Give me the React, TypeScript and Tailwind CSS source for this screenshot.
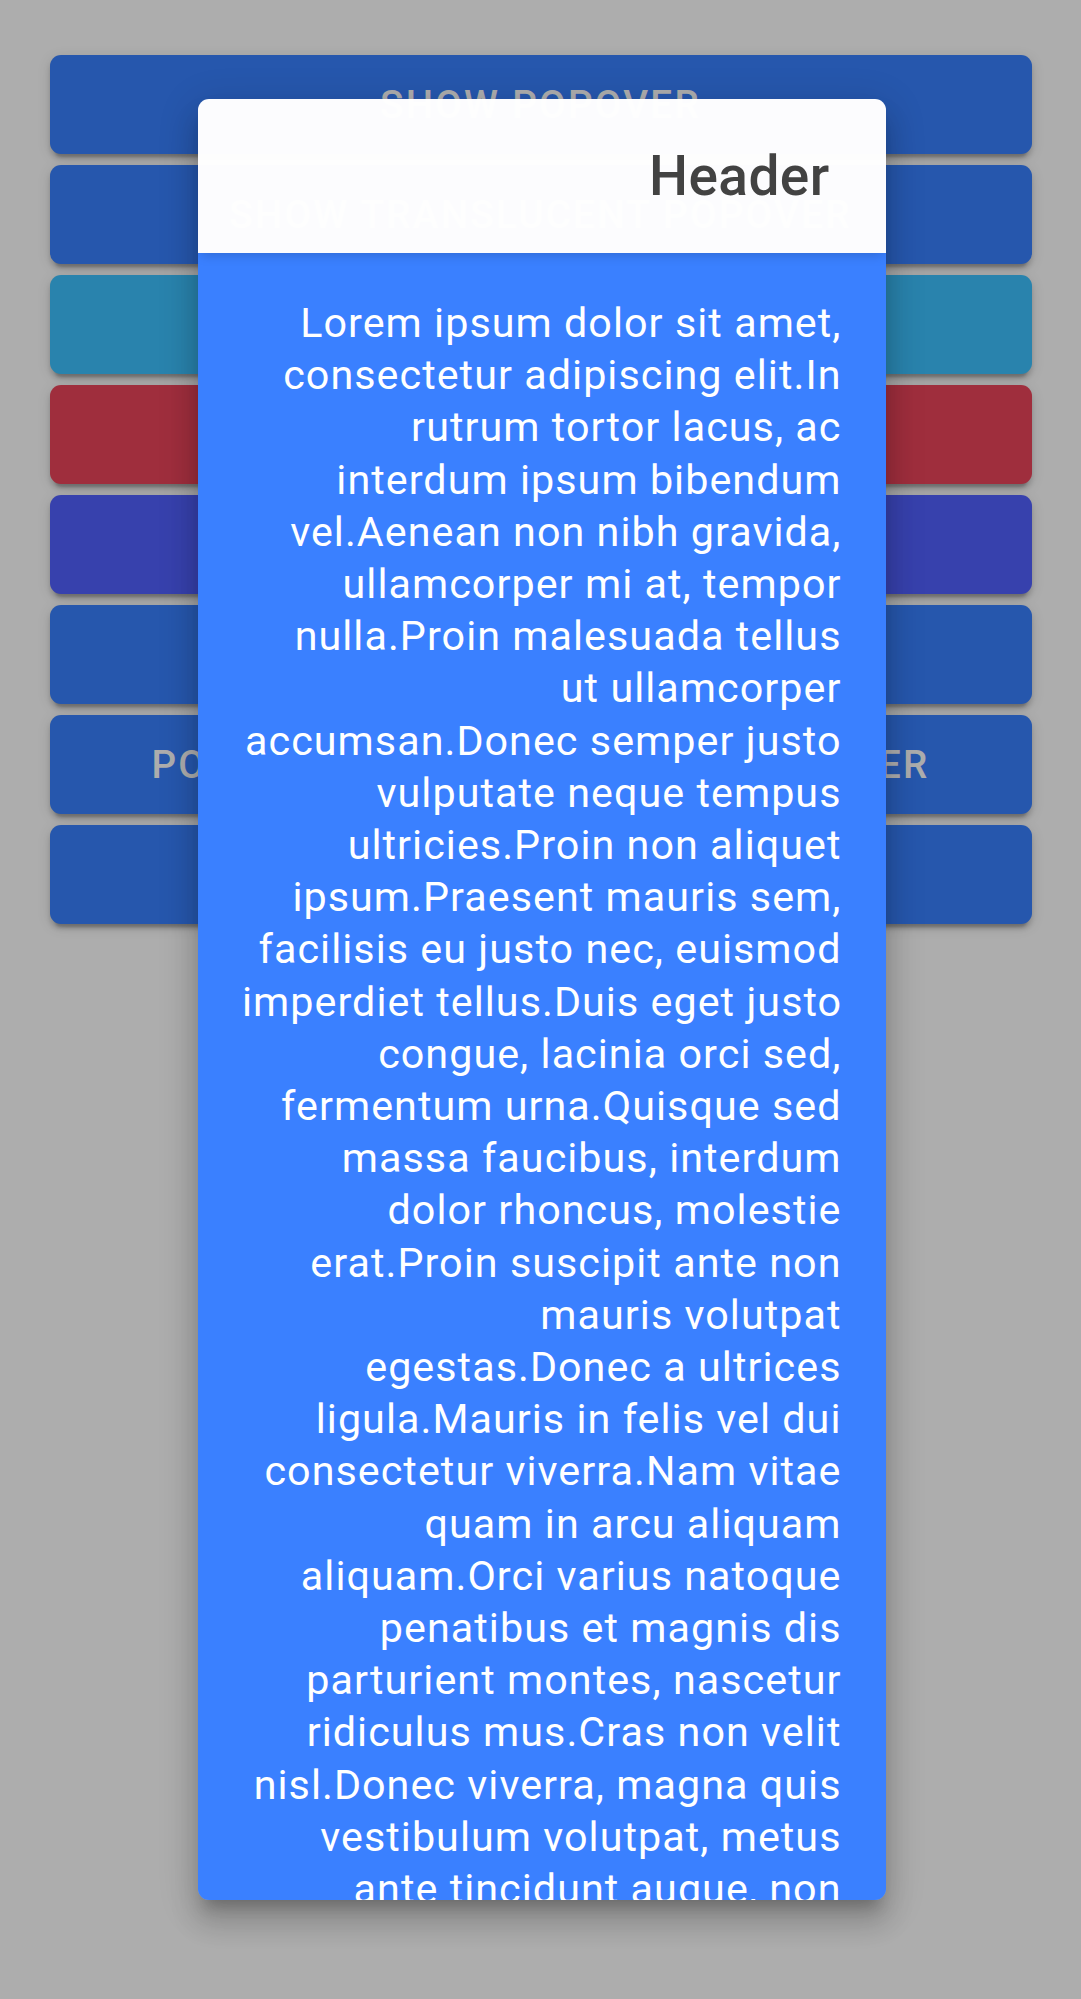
import React from "react";

const buttons: { label: string; bg: string }[] = [
  { label: "Show Popover", bg: "bg-[#3880ff]" },
  { label: "Show Translucent Popover", bg: "bg-[#3880ff]" },
  { label: "Show Long List Popover", bg: "bg-[#3dc2ff]" },
  { label: "No Event Popover", bg: "bg-[#eb445a]" },
  { label: "Custom Class Popover", bg: "bg-[#5260ff]" },
  { label: "Popover with Header", bg: "bg-[#3880ff]" },
  { label: "Popover with Translucent Header", bg: "bg-[#3880ff]" },
  { label: "Popover with Scroll", bg: "bg-[#3880ff]" },
];

const lines = [
  "Lorem ipsum dolor sit amet,",
  "consectetur adipiscing elit.In",
  "rutrum tortor lacus, ac",
  "interdum ipsum bibendum",
  "vel.Aenean non nibh gravida,",
  "ullamcorper mi at, tempor",
  "nulla.Proin malesuada tellus",
  "ut ullamcorper",
  "accumsan.Donec semper justo",
  "vulputate neque tempus",
  "ultricies.Proin non aliquet",
  "ipsum.Praesent mauris sem,",
  "facilisis eu justo nec, euismod",
  "imperdiet tellus.Duis eget justo",
  "congue, lacinia orci sed,",
  "fermentum urna.Quisque sed",
  "massa faucibus, interdum",
  "dolor rhoncus, molestie",
  "erat.Proin suscipit ante non",
  "mauris volutpat",
  "egestas.Donec a ultrices",
  "ligula.Mauris in felis vel dui",
  "consectetur viverra.Nam vitae",
  "quam in arcu aliquam",
  "aliquam.Orci varius natoque",
  "penatibus et magnis dis",
  "parturient montes, nascetur",
  "ridiculus mus.Cras non velit",
  "nisl.Donec viverra, magna quis",
  "vestibulum volutpat, metus",
  "ante tincidunt augue, non",
  "sagittis nisl tortor vel",
  "lectus.Sed tempor nunc sed",
];

export default function App() {
  return (
    <div
      className="relative min-h-screen h-[1999px] w-full overflow-hidden bg-white"
      style={{ fontFamily: "Roboto, 'Noto Sans', sans-serif" }}
    >
      {/* page content */}
      <div className="flex flex-col gap-[11px] px-[49.5px] pt-[55px]">
        {buttons.map((b) => (
          <div
            key={b.label}
            className={`flex h-[99px] items-center justify-center rounded-[11px] ${b.bg} text-[38.5px] font-medium uppercase tracking-[0.06em] text-white shadow-[0_8px_3px_-5px_rgba(0,0,0,0.2),0_5px_5px_0_rgba(0,0,0,0.14),0_3px_14px_0_rgba(0,0,0,0.12)]`}
          >
            {b.label}
          </div>
        ))}
      </div>

      {/* backdrop */}
      <div className="absolute inset-0 bg-black/[0.32]" />

      {/* popover */}
      <div className="absolute left-[198px] top-[99px] flex h-[1801px] w-[687.5px] flex-col overflow-hidden rounded-[11px] shadow-[0_14px_14px_-8px_rgba(0,0,0,0.2),0_22px_27px_3px_rgba(0,0,0,0.14),0_8px_38px_5px_rgba(0,0,0,0.12)]">
        <div className="relative z-10 flex h-[154px] shrink-0 items-center justify-end bg-white/[0.985] pr-[56px] shadow-[0_5px_11px_-3px_rgba(0,0,0,0.18)]">
          <span className="text-[55px] font-medium leading-[normal] tracking-[0.4px] text-[#424242]">
            Header
          </span>
        </div>
        <div className="flex-1 overflow-hidden bg-[#3a80ff] p-[44px]">
          <div className="text-right text-[41.25px] leading-[52.2px] tracking-[1.05px] text-white">
            {lines.map((l, i) => (
              <div key={i} className="whitespace-nowrap">
                {l}
              </div>
            ))}
          </div>
        </div>
      </div>
    </div>
  );
}
